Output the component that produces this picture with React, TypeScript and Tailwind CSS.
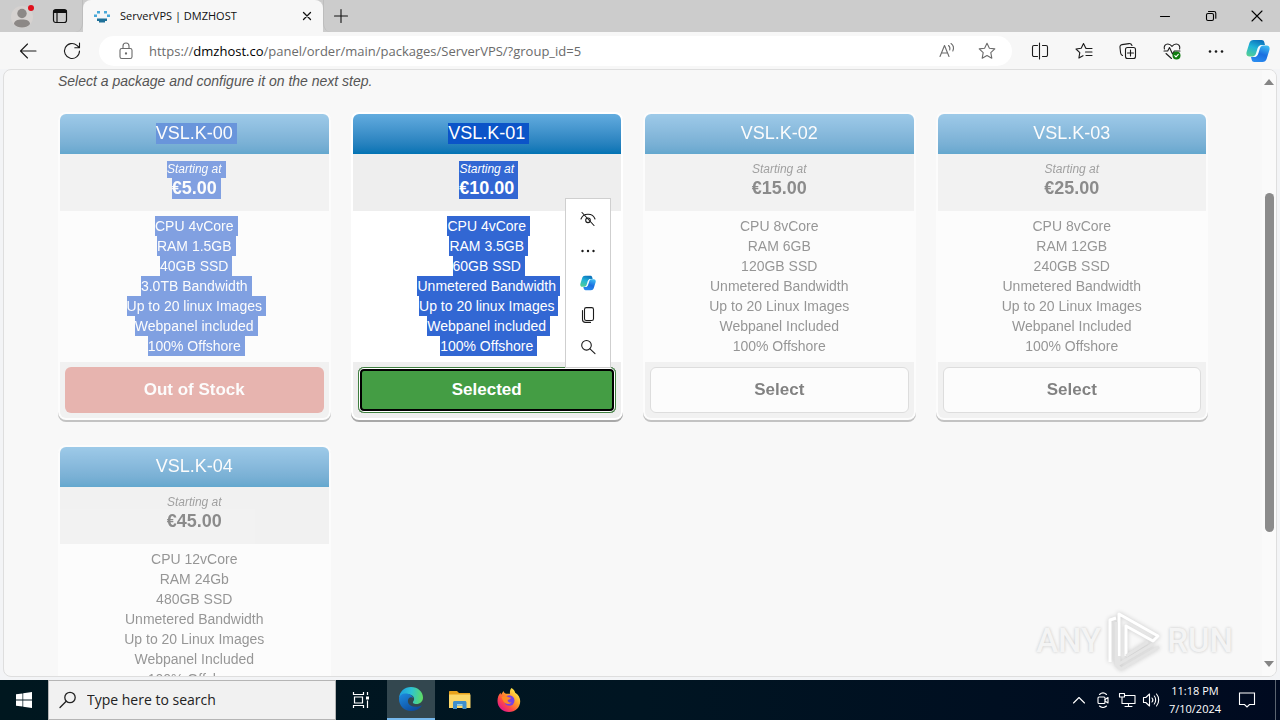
import React from "react";

type PlanState = "soldout" | "selected" | "open";

interface Plan {
  name: string;
  price: string;
  features: string[];
  state: PlanState;
  highlighted: boolean;
}

const plans: Plan[] = [
  {
    name: "VSL.K-00",
    price: "€5.00",
    features: ["CPU 4vCore", "RAM 1.5GB", "40GB SSD", "3.0TB Bandwidth", "Up to 20 linux Images", "Webpanel included", "100% Offshore"],
    state: "soldout",
    highlighted: true,
  },
  {
    name: "VSL.K-01",
    price: "€10.00",
    features: ["CPU 4vCore", "RAM 3.5GB", "60GB SSD", "Unmetered Bandwidth", "Up to 20 linux Images", "Webpanel included", "100% Offshore"],
    state: "selected",
    highlighted: true,
  },
  {
    name: "VSL.K-02",
    price: "€15.00",
    features: ["CPU 8vCore", "RAM 6GB", "120GB SSD", "Unmetered Bandwidth", "Up to 20 Linux Images", "Webpanel Included", "100% Offshore"],
    state: "open",
    highlighted: false,
  },
  {
    name: "VSL.K-03",
    price: "€25.00",
    features: ["CPU 8vCore", "RAM 12GB", "240GB SSD", "Unmetered Bandwidth", "Up to 20 Linux Images", "Webpanel Included", "100% Offshore"],
    state: "open",
    highlighted: false,
  },
  {
    name: "VSL.K-04",
    price: "€45.00",
    features: ["CPU 12vCore", "RAM 24Gb", "480GB SSD", "Unmetered Bandwidth", "Up to 20 Linux Images", "Webpanel Included", "100% Offshore"],
    state: "open",
    highlighted: false,
  },
];

interface IconProps {
  size?: number;
  box?: number;
  className?: string;
  children: React.ReactNode;
}

function Icon({ size = 20, box = 20, className = "", children }: IconProps) {
  return (
    <svg
      width={size}
      height={size}
      viewBox={`0 0 ${box} ${box}`}
      fill="none"
      stroke="currentColor"
      strokeWidth="1.1"
      strokeLinecap="round"
      strokeLinejoin="round"
      className={className}
      aria-hidden="true"
    >
      {children}
    </svg>
  );
}

function CopilotLogo({ size, id }: { size: number; id: string }) {
  return (
    <svg width={size} height={size} viewBox="0 0 24 24" aria-hidden="true">
      <defs>
        <linearGradient id={`${id}-l`} x1="0.6" y1="0" x2="0.2" y2="1">
          <stop offset="0" stopColor="#0c74bd" />
          <stop offset="0.45" stopColor="#20b3d8" />
          <stop offset="1" stopColor="#55cf93" />
        </linearGradient>
        <linearGradient id={`${id}-r`} x1="0.7" y1="0" x2="0.3" y2="1">
          <stop offset="0" stopColor="#3bb9f2" />
          <stop offset="0.5" stopColor="#1b6fe0" />
          <stop offset="1" stopColor="#2a8cf0" />
        </linearGradient>
      </defs>
      <path d="M7.500 1h8.200c1.400 0 2.200.8 2.600 2.200L19 6h-3c-1.700 0-2.600.7-3.100 2.400l-2 6.600c-.5 1.700-1.500 2.500-3.200 2.500H3.500C1 17.500-.1 15.600.6 13L3.400 4C4.100 2 5.400 1 7.500 1z" fill={`url(#${id}-l)`} />
      <path d="M16.500 23H8.300c-1.400 0-2.200-.8-2.600-2.200L5 18h3c1.700 0 2.600-.7 3.100-2.400l2-6.600c.5-1.700 1.500-2.500 3.200-2.500h4.200c2.500 0 3.600 1.900 2.900 4.500L20.600 20c-.7 2-2 3-4.100 3z" fill={`url(#${id}-r)`} />
      <path d="M11.500 9.500c.8-2.300 2-3.200 4.200-3.200l1.600.2c-2.300.3-3 1.500-3.600 3.500l-1.200 4c-.9 2.800-2 4-4.300 4l-1.500-.4c2.100-.5 2.900-1.900 3.500-3.900z" fill="#f4fbff" />
    </svg>
  );
}

function TabBar() {
  return (
    <header className="flex h-8 shrink-0 items-stretch bg-[#cccccc]">
      <div className="flex w-[83px] items-center rounded-br-lg border-r border-[#bdbdbd] bg-[#cccccc]">
        <button aria-label="Profile" className="flex w-11 justify-center">
          <svg width="24" height="26" viewBox="0 0 24 26" aria-hidden="true">
            <circle cx="12" cy="14" r="11" fill="#d6d2d0" />
            <circle cx="12" cy="10.500" r="4.700" fill="#8c8886" />
            <path d="M4 21c0-3.200 3.400-4.500 8-4.500s8 1.300 8 4.500c-2 2.600-5 3.500-8 3.500s-6-.9-8-3.500z" fill="#8c8886" />
            <circle cx="21" cy="5" r="3" fill="#e0101c" />
          </svg>
        </button>
        <button aria-label="Tab actions" className="flex w-8 justify-center">
          <svg width="16" height="16" viewBox="0 0 16 16" fill="none" stroke="#111" strokeWidth="1.200" aria-hidden="true">
            <rect x="1.500" y="1.500" width="13" height="13" rx="2.200" />
            <path d="M2 2.500h12v2H2z" fill="#111" />
            <path d="M5 4v10.500" />
          </svg>
        </button>
      </div>
      <div className="flex w-60 items-center rounded-t-lg bg-[#f7f7f7] pl-[11px]">
        <svg width="16" height="14" viewBox="0 0 16 14" aria-hidden="true">
          <path d="M3 2h3v2.500H3zM10 2h3v2.500h-3zM0 5.500h3V8H0zM13 5.500h3V8h-3z" fill="#48a8d8" />
          <path d="M3 9.500h10V12h-2v1.500H5V12H3z" fill="#1f7199" />
        </svg>
        <span className="ml-[10px] flex-1 text-[11px] leading-4 text-[#111]">ServerVPS | DMZHOST</span>
        <button aria-label="Close tab" className="flex w-8 justify-center text-[#111]">
          <Icon size={10} box={10} className="stroke-[1.300]"><path d="M1.500 1.500l7 7M8.500 1.500l-7 7" /></Icon>
        </button>
      </div>
      <button aria-label="New tab" className="flex w-[34px] items-center justify-center rounded-bl-lg border-l border-[#bdbdbd] text-[#111]">
        <Icon size={16} box={16}><path d="M8 1.500v13M1.500 8h13" /></Icon>
      </button>
      <div className="flex-1" />
      <button aria-label="Minimize" className="flex w-[46px] items-center justify-center text-black">
        <Icon size={12} box={12}><path d="M1.500 6.500h9" /></Icon>
      </button>
      <button aria-label="Restore" className="flex w-[46px] items-center justify-center text-black">
        <Icon size={12} box={12}><rect x="1.500" y="3.500" width="7" height="7" rx="1.500" /><path d="M3.500 1.500H9a1.800 1.800 0 0 1 1.800 1.800v5" /></Icon>
      </button>
      <button aria-label="Close" className="flex w-[46px] items-center justify-center text-black">
        <Icon size={12} box={12}><path d="M1 1l10 10M11 1L1 11" /></Icon>
      </button>
    </header>
  );
}

function Toolbar() {
  const tool = "flex w-11 shrink-0 justify-center text-[#1b1b1b]";
  return (
    <div className="flex h-[37px] shrink-0 items-center bg-[#f7f7f7] pl-[6px] pr-[2px]">
      <button aria-label="Back" className={tool}>
        <Icon><path d="M18 10H2.500M9.500 3L2.500 10l7 7" /></Icon>
      </button>
      <button aria-label="Refresh" className={tool}>
        <Icon><path d="M17.500 10a7.500 7.500 0 1 1-2.600-5.700L17.300 6.500M17.500 2v4.700h-4.700" /></Icon>
      </button>
      <div className="ml-[5px] mr-[6px] flex h-[30px] flex-1 items-center rounded-full bg-white pl-[17px] pr-[5px] text-[#6b6b6b]">
        <button aria-label="Site information">
          <Icon><rect x="4" y="7.500" width="12" height="10" rx="1.800" /><path d="M7 7.500V5a3 3 0 0 1 6 0v2.500" /><circle cx="10" cy="12.500" r="0.600" fill="currentColor" /></Icon>
        </button>
        <div className="ml-[13px] flex-1 whitespace-nowrap text-[13px] leading-5" aria-label="Address">
          https://<span className="text-black">dmzhost.co</span>/panel/order/main/packages/ServerVPS/?group_id=5
        </div>
        <button aria-label="Read aloud" className="flex w-10 justify-center">
          <Icon><path d="M3 15.500L7.500 4.500 12 15.500M4.500 12h6M11.500 4.500c1.300 1 1.700 2.700 1.200 4.500M14 2.500c2.400 1.700 3 4.700 1.800 7.500" /></Icon>
        </button>
        <button aria-label="Add to favorites" className="flex w-10 justify-center">
          <Icon><path d="M10 2.200l2.400 5 5.400.7-4 3.800 1 5.500-4.800-2.700-4.800 2.700 1-5.500-4-3.800 5.400-.7z" /></Icon>
        </button>
      </div>
      <button aria-label="Split screen" className={tool}>
        <Icon><path d="M7.500 4.500H4A1.500 1.500 0 0 0 2.500 6v8A1.500 1.500 0 0 0 4 15.500h3.500M12.500 4.500H16A1.500 1.500 0 0 1 17.500 6v8a1.500 1.500 0 0 1-1.500 1.500h-3.500M9.500 2v16" /></Icon>
      </button>
      <button aria-label="Favorites" className={tool}>
        <Icon><path d="M12 7h-.3L9.500 2.500 7.200 7.200 2 8l3.800 3.700-.9 5.300 4.100-2.300M12 7.500h6M11.500 11h6.500M12 14.500h6" /></Icon>
      </button>
      <button aria-label="Collections" className={tool}>
        <Icon><rect x="7.500" y="6.500" width="10" height="11" rx="2" /><path d="M12.500 9v6M9.500 12h6M4.500 14.500C3 14 2.800 13 2.600 12L2 6.500C1.800 5 2.500 3.800 4 3.600l7-1c1.500-.2 2.500.6 3 1.900" /></Icon>
      </button>
      <button aria-label="Browser essentials" className={tool}>
        <Icon>
          <path d="M2.400 8C1.500 5 3.500 3 5.800 3 7.800 3 9 4 10 5.300 11 4 12.200 3 14.200 3c2.300 0 4.300 2 3.400 5M2 10h3.700l1.800-3.500 3 6.500 1.800-3H18M4 12.500l5.500 5" />
          <circle cx="14.500" cy="14.500" r="4" fill="#107c10" stroke="none" />
          <path d="M12.800 14.600l1.200 1.200 2.300-2.500" stroke="#fff" />
        </Icon>
      </button>
      <button aria-label="Settings and more" className={tool}>
        <Icon><g fill="currentColor" stroke="none"><circle cx="4" cy="10.500" r="1.300" /><circle cx="10" cy="10.500" r="1.300" /><circle cx="16" cy="10.500" r="1.300" /></g></Icon>
      </button>
      <button aria-label="Copilot" className="flex w-10 shrink-0 justify-center"><CopilotLogo size={24} id="bar" /></button>
    </div>
  );
}

function SelectionMenu() {
  const item = "flex h-8 items-center justify-center";
  return (
    <div className="absolute right-[10px] top-[84px] z-10 flex h-[170px] w-[46px] flex-col border border-[#cfcfcf] bg-white pt-1 text-[#1b1b1b]">
      <button aria-label="Hide menu" className={item}>
        <Icon size={16} box={16}><path d="M1 8c1-3 3.500-4.800 7-4.800S14 5 15 8M2 1.500l12 13" /><circle cx="8" cy="9.300" r="2.300" /></Icon>
      </button>
      <button aria-label="More actions" className={item}>
        <Icon size={16} box={16}><g fill="currentColor" stroke="none"><circle cx="2.500" cy="8" r="1.200" /><circle cx="8" cy="8" r="1.200" /><circle cx="13.500" cy="8" r="1.200" /></g></Icon>
      </button>
      <button aria-label="Ask Copilot" className={item}><CopilotLogo size={16} id="menu" /></button>
      <button aria-label="Copy" className={item}>
        <Icon size={16} box={16}><rect x="4.500" y="0.600" width="9" height="12.900" rx="1.800" /><path d="M2.500 3.500v9c0 1.800 1 2.900 3 2.900h5" /></Icon>
      </button>
      <button aria-label="Search" className={item}>
        <Icon size={16} box={16}><circle cx="6.500" cy="6.300" r="4.800" /><path d="M10 9.800l5 4.800" /></Icon>
      </button>
    </div>
  );
}

const buttonStyles: Record<PlanState, string> = {
  soldout: "bg-[#dd877f] text-white",
  selected: "bg-[#449d44] text-white shadow-[inset_0_0_0_1px_#3f7f3f,inset_0_0_0_2px_#ffffff,inset_0_0_0_4px_#000000]",
  open: "border border-[#cccccc] bg-white text-[#333333]",
};

const buttonLabels: Record<PlanState, string> = {
  soldout: "Out of Stock",
  selected: "Selected",
  open: "Select",
};

function PlanCard({ plan }: { plan: Plan }) {
  const mark = plan.highlighted ? "inline-block bg-[#3267d3] text-white pr-1 -mr-1" : "inline-block";
  const titleMark = plan.highlighted ? "inline-block bg-[#0b54c8] pr-1 -mr-1" : "inline-block";
  const active = plan.state === "selected";
  return (
    <section
      className={`relative rounded-lg border-2 border-white bg-white text-center text-[#444444] ${
        active ? "shadow-[0_2px_0_#a8a8a8]" : "opacity-60 shadow-[0_2px_0_#a0a0a0]"
      }`}
    >
      <h2 className="flex h-10 items-center justify-center rounded-t-md bg-linear-to-b from-[#62acdf] to-[#0073b3] pb-[2px] text-[18px] font-normal leading-[21px] text-white">
        <span className={titleMark}>{plan.name}</span>
      </h2>
      <div className="h-[57px] bg-[#eeeeee] pt-[7px]">
        <div className="text-[12px] italic leading-[17px] text-[#666666]"><span className={mark}>Starting at</span></div>
        <div className="text-[18px] font-bold leading-[21px]"><span className={mark}>{plan.price}</span></div>
      </div>
      <ul className="pb-[6px] pt-[5px] text-[14px] leading-5 text-[#555555]">
        {plan.features.map((feature) => (
          <li key={feature}><span className={`${mark} align-top`}>{feature}</span></li>
        ))}
      </ul>
      <div className="rounded-b-md bg-[#eeeeee] p-[5px]">
        <button
          disabled={plan.state === "soldout"}
          className={`h-[46px] w-full rounded-md text-[17px] font-bold leading-6 ${buttonStyles[plan.state]}`}
        >
          {buttonLabels[plan.state]}
        </button>
      </div>
      {active && <SelectionMenu />}
    </section>
  );
}

function Scrollbar() {
  return (
    <div className="flex w-[14px] shrink-0 flex-col items-center bg-[#fafafa] py-[9px]" aria-hidden="true">
      <svg width="10" height="6" viewBox="0 0 10 6"><path d="M5 0l5 6H0z" fill="#858585" /></svg>
      <div className="flex w-full flex-1 flex-col items-center py-2">
        <div className="grow-[100]" />
        <div className="w-[9px] grow-[337] rounded-full bg-[#8b8b8b]" />
        <div className="grow-[121]" />
      </div>
      <svg width="10" height="6" viewBox="0 0 10 6"><path d="M5 6l5-6H0z" fill="#858585" /></svg>
    </div>
  );
}

function Watermark() {
  return (
    <div className="absolute bottom-1 right-[43px] flex items-center gap-[5px] font-['Roboto','Liberation_Sans',sans-serif] text-[33px] font-medium leading-[60px] text-[#f4f4f4] [text-shadow:0_0_3px_#c4c4c4]">
      <span>ANY</span>
      <svg width="56" height="62" viewBox="0 0 56 62" fill="none" strokeWidth="3" strokeLinejoin="round" className="[filter:drop-shadow(0_0_2px_#c4c4c4)]" aria-hidden="true">
        <path d="M4 52V10l6-2M13 46V4l39 22-5 5L20 16v30" stroke="#fff" />
        <path d="M10 12v42l5 5 38-22M13 46v8l34-20M20 46l22-14" stroke="#e4e4e4" />
      </svg>
      <span>RUN</span>
    </div>
  );
}

function Page() {
  return (
    <div className="flex min-h-0 flex-1 bg-[#f3f4f6] px-[3px] pb-[3px]">
      <div className="relative flex min-w-0 flex-1 overflow-hidden rounded-lg border border-[#dedede] bg-[#f8f8f8]">
        <main className="min-w-0 flex-1 overflow-y-auto px-[54px] pb-6 pt-px font-['Liberation_Sans',Arial,sans-serif] [scrollbar-width:none]">
          <p className="text-[14px] italic leading-5 text-[#555555]">Select a package and configure it on the next step.</p>
          <div className="mt-[21px] grid grid-cols-4 gap-x-5 gap-y-[25px]">
            {plans.map((plan) => (
              <PlanCard key={plan.name} plan={plan} />
            ))}
          </div>
        </main>
        <Scrollbar />
        <Watermark />
      </div>
    </div>
  );
}

function EdgeLogo() {
  return (
    <svg width="26" height="26" viewBox="0 0 26 26" aria-hidden="true">
      <defs>
        <linearGradient id="edge-top" x1="0" y1="0.400" x2="1" y2="0.500">
          <stop offset="0" stopColor="#1c9de0" />
          <stop offset="0.500" stopColor="#2ec3d2" />
          <stop offset="1" stopColor="#5fdc62" />
        </linearGradient>
        <linearGradient id="edge-low" x1="0" y1="0" x2="0.700" y2="1">
          <stop offset="0" stopColor="#1d8be0" />
          <stop offset="1" stopColor="#0d4a9c" />
        </linearGradient>
      </defs>
      <path d="M1 12C1.500 5.500 6.500 1 13 1c7 0 12 5 12 10.500 0 4-3 6.500-6.500 6.500-3 0-4.500-1.200-3-3 1.300-1.800.8-5-3-6.300C8.500 7.500 3 8.500 1 12z" fill="url(#edge-top)" />
      <path d="M1 13c0-4 4-6 8-5.500 3.500.5 6 2.500 6.300 5-1-1.500-3-1.700-4.300-.5-2.500 3-1 9 7 8.800 2.500 0 4.200-.8 5.200-1.300.4-.2.600.1.400.5C21.500 23 17.500 25 13 25 6 25 1 19.500 1 13z" fill="url(#edge-low)" />
    </svg>
  );
}

function ExplorerLogo() {
  return (
    <svg width="24" height="20" viewBox="0 0 24 20" aria-hidden="true">
      <path d="M1 2c0-.6.400-1 1-1h7l2 2h11v4H1z" fill="#e8a21c" />
      <path d="M1 4.500h21.500V18H1z" fill="#fcd769" />
      <path d="M5 19v-6.500c0-.8.700-1.500 1.500-1.500h10.500c.8 0 1.500.7 1.500 1.500V19h-4v-3.500H9V19z" fill="#3f8fcc" />
      <path d="M9 14h5.500v1.500H9z" fill="#8fd0f4" />
    </svg>
  );
}

function FirefoxLogo() {
  return (
    <svg width="26" height="26" viewBox="0 0 26 26" aria-hidden="true">
      <defs>
        <linearGradient id="fox" x1="0.850" y1="0.100" x2="0.150" y2="0.900">
          <stop offset="0" stopColor="#fff04a" />
          <stop offset="0.400" stopColor="#ff9a2a" />
          <stop offset="0.700" stopColor="#ff4b45" />
          <stop offset="1" stopColor="#e3158c" />
        </linearGradient>
      </defs>
      <path d="M15.500 1c2 1.200 3.200 2.700 3.700 4.700 3 1.800 5 5 5 8.500C24.200 20.500 19.200 25 13 25S1.500 20.500 1.500 14c0-3.500 1-6.200 3-8.200l.5 2 2.500-3.800c.4 1.400 1.100 2.300 2.500 2.800h4c-.3-2.300 0-4 1.500-5.800z" fill="url(#fox)" />
      <circle cx="13.300" cy="13.500" r="5.200" fill="#7542e5" />
      <path d="M5.500 10c2-1.400 4.800-1.400 7 .2l2.500.5c-.3 1.500-2 1.800-3.300 2.300-.2 2 1.500 3 3.800 2.200-1 2.300-6 2.600-8-.7C6.500 13 6 11.500 5.500 10z" fill="#ff8b24" />
    </svg>
  );
}

function Taskbar() {
  const app = "flex h-10 w-12 items-center justify-center";
  const tray = "flex w-6 items-center justify-center";
  return (
    <footer className="flex h-10 shrink-0 items-stretch bg-linear-to-r from-[#00171f] via-[#001522] to-[#000a20] text-white">
      <button aria-label="Start" className={app}>
        <svg width="16" height="16" viewBox="0 0 16 16" fill="#fff" aria-hidden="true">
          <path d="M0 2.300l6.500-.9v6.200H0zM7.200 1.300L16 0v7.600H7.200zM0 8.400h6.500v6.200L0 13.700zM7.200 8.400H16V16l-8.800-1.300z" />
        </svg>
      </button>
      <label className="flex w-72 items-center border border-[#b5b5b5] bg-[#f1f1f1] pl-[10px] text-[#222]">
        <Icon size={18} box={18} className="stroke-[1.300]"><circle cx="11" cy="6.500" r="5.200" /><path d="M7.200 10.300L1 16.500" /></Icon>
        <input
          type="text"
          aria-label="Search"
          placeholder="Type here to search"
          className="ml-[10px] min-w-0 flex-1 bg-transparent text-[14px] leading-5 outline-none placeholder:text-[#222]"
        />
      </label>
      <div className="flex gap-px">
        <button aria-label="Task view" className="flex w-[50px] items-center justify-center">
          <svg width="18" height="16" viewBox="0 0 18 16" fill="none" stroke="#fff" strokeWidth="1.200" aria-hidden="true">
            <path d="M1.500 0v2.500h10V0M1.500 16v-2.500h10V16M2.500 5h8v6h-8zM15.500 0v3M15.500 8.500V16" />
            <path d="M14 4.500h3v3h-3z" fill="#fff" stroke="none" />
          </svg>
        </button>
        <button aria-label="Microsoft Edge" className={`${app} border-b-2 border-[#76b9ed] bg-[#33474f]`}><EdgeLogo /></button>
        <button aria-label="File Explorer" className={app}><ExplorerLogo /></button>
        <button aria-label="Firefox" className={app}><FirefoxLogo /></button>
      </div>
      <div className="flex-1" />
      <button aria-label="Show hidden icons" className={tray}><Icon size={14} box={14}><path d="M1.500 10L7 4.500l5.500 5.500" /></Icon></button>
      <button aria-label="Meet now" className={tray}>
        <Icon size={16} box={16}><rect x="3" y="5" width="7" height="6.500" rx="1" /><path d="M10 7.500l3-2v5.500l-3-2M4.500 2.500C6.500.7 9.500.7 11.500 2.500M4.500 14c2 1.700 5 1.700 7 0" /></Icon>
      </button>
      <button aria-label="Network" className={tray}>
        <Icon size={18} box={18}><path d="M6.500 4.500H17v8H4V9M10.500 12.500v3M7 15.500h7M1.500 2.500h5v3.500h-5zM4 6v3" /></Icon>
      </button>
      <button aria-label="Volume" className={tray}>
        <Icon size={18} box={18}><path d="M1.500 6.500h2.300L7.500 3v12l-3.700-3.500H1.500zM10 7c.9 1 .9 3 0 4M12.300 5c1.800 2 1.800 6 0 8M14.500 3c2.900 3.300 2.900 8.700 0 12" /></Icon>
      </button>
      <div className="flex w-16 flex-col justify-center whitespace-nowrap text-center text-[11px] leading-[18px]">
        <span>11:18 PM</span>
        <span>7/10/2024</span>
      </div>
      <button aria-label="Notifications" className="flex w-10 items-center justify-center">
        <Icon size={18} box={18}><path d="M1.500 2h15v11.500h-5L9 16l-2.500-2.500h-5z" strokeLinejoin="miter" /></Icon>
      </button>
      <div className="ml-2 w-[5px] border-l border-[#5b6470]" />
    </footer>
  );
}

export default function App() {
  return (
    <div className="flex h-screen flex-col overflow-hidden bg-[#f7f7f7] font-['Open_Sans','Noto_Sans',sans-serif]">
      <TabBar />
      <Toolbar />
      <Page />
      <Taskbar />
    </div>
  );
}
